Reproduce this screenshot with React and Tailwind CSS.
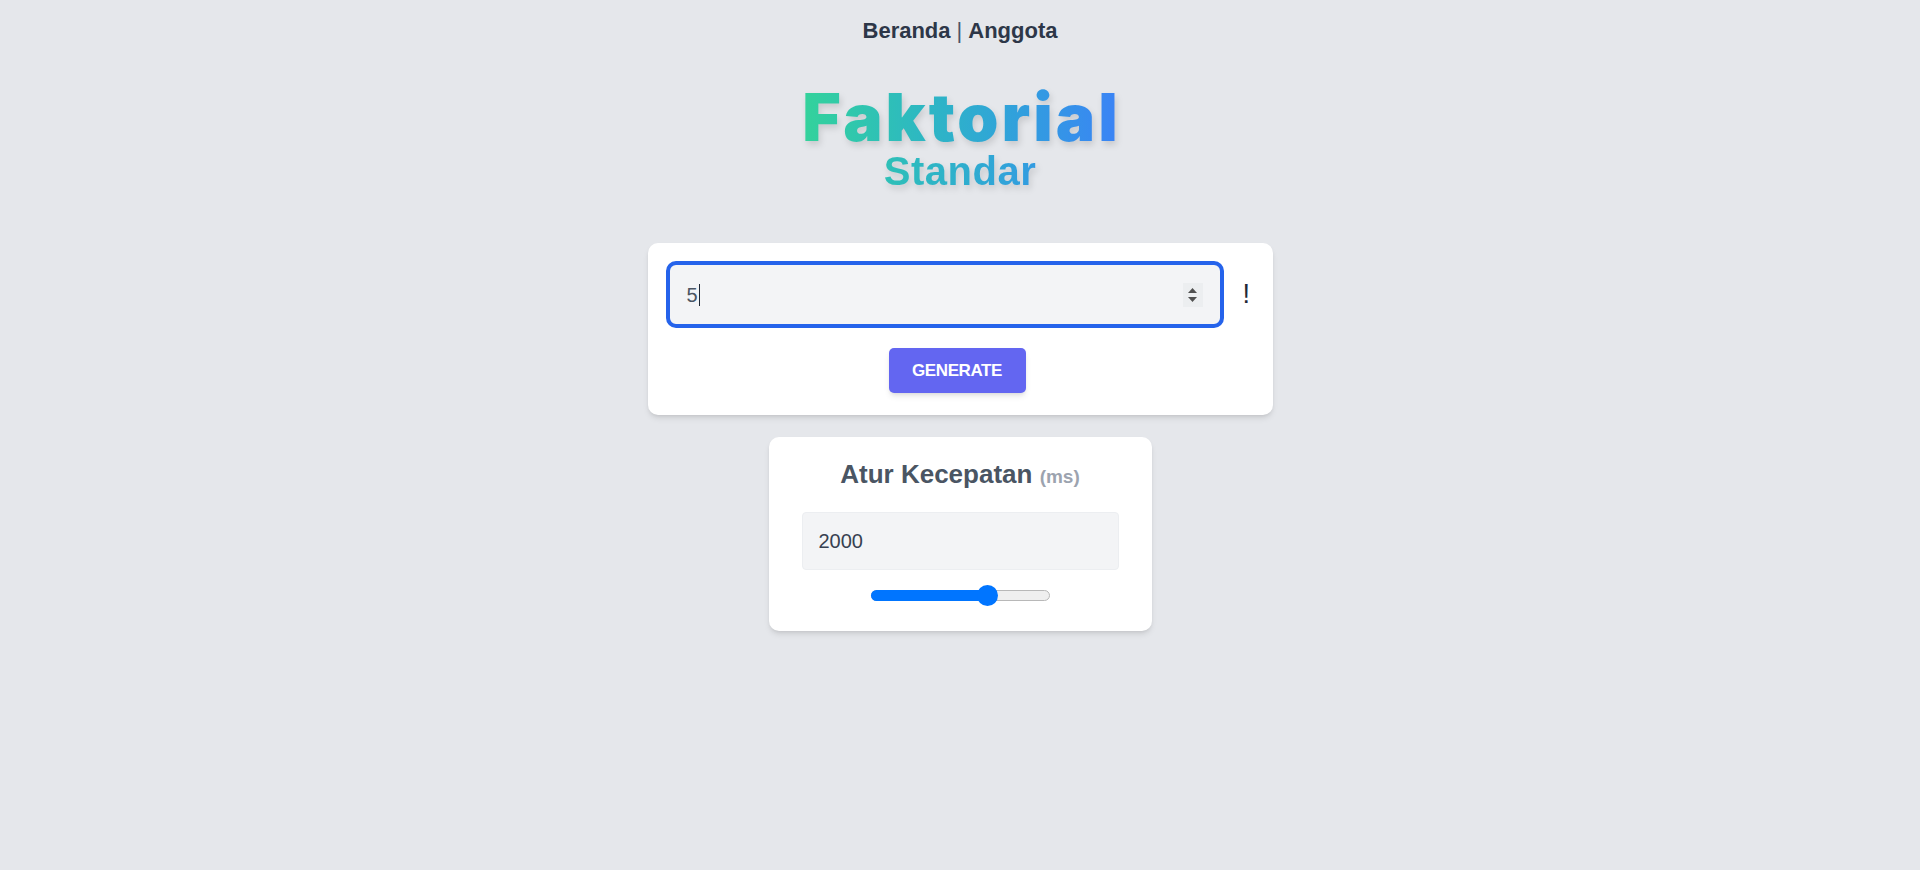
export default function App() {
  const font = { fontFamily: '"Liberation Sans", Arial, sans-serif' };
  return (
    <div
      className="min-h-[870px] w-full bg-[#e5e7eb] flex flex-col items-center"
      style={font}
    >
      {/* Nav */}
      <nav className="pt-[20px] text-[22px] leading-[22px] font-bold text-[#2d3748] flex items-center">
        <a className="cursor-pointer">Beranda</a>
        <span className="font-normal text-[#4a5568] px-[6px]">|</span>
        <a className="cursor-pointer">Anggota</a>
      </nav>

      {/* Title */}
      <div className="mt-[41px] drop-shadow-[2px_4px_3px_rgba(0,0,0,0.12)]">
        <div className="bg-gradient-to-r from-[#34d399] to-[#3b82f6] bg-clip-text text-transparent text-center">
          <div className="font-['Inter',sans-serif] font-black text-[66px] leading-[68px] tracking-[3px] pl-[3px]">Faktorial</div>
          <div className="font-bold text-[40px] leading-[40px] tracking-[0.5px]">Standar</div>
        </div>
      </div>

      {/* Card 1 */}
      <div className="mt-[52px] w-[625px] bg-white rounded-[10px] shadow-md pt-[18px] pb-[22px] px-[18px]">
        <div className="flex items-center">
          <div className="w-[558px] h-[67px] border-4 border-[#2563eb] rounded-[10px] bg-[#f3f4f6] flex items-center pl-[17px] pr-[17px]">
            <div className="flex-1 flex items-center">
              <span className="text-[20px] text-[#4b5563]">5</span>
              <span className="w-px h-[22px] bg-[#1f2937] ml-[1px]"></span>
            </div>
            <div className="w-[20px] h-[24px] bg-[#eceef0] flex flex-col items-center justify-center gap-[4px]">
              <svg width="9" height="5" viewBox="0 0 9 5">
                <path d="M4.5 0 L9 5 L0 5 Z" fill="#505050" />
              </svg>
              <svg width="9" height="5" viewBox="0 0 9 5">
                <path d="M0 0 L9 0 L4.5 5 Z" fill="#505050" />
              </svg>
            </div>
          </div>
          <span className="ml-[19px] text-[27px] leading-[27px] text-[#1f2937]">!</span>
        </div>
        <div className="mt-[20px] flex justify-center">
          <button className="mr-[6px] w-[137px] h-[45px] bg-[#6366f1] rounded-[5px] shadow-md text-white font-bold text-[17px] tracking-[-0.4px]">
            GENERATE
          </button>
        </div>
      </div>

      {/* Card 2 */}
      <div className="mt-[22px] w-[383px] bg-white rounded-[10px] shadow-md pt-[24px] pb-[25px] px-[33px] flex flex-col items-center">
        <div className="text-[26px] leading-[26px] font-bold text-[#4a5563]">
          Atur Kecepatan <span className="text-[19px] text-[#9ca3af]">(ms)</span>
        </div>
        <div className="mt-[22px] w-[317px] h-[58px] bg-[#f3f4f6] border border-[#eceef1] rounded-[4px] flex items-center pl-[16px] text-[20px] text-[#374151]">
          2000
        </div>
        <div className="mt-[15px] h-[21px] flex items-center">
          <div className="relative w-[179px] h-[11px] rounded-full bg-[#efefef] border border-[#b8b8b8]">
            <div className="absolute left-[-1px] top-[-1px] h-[11px] w-[116px] rounded-full bg-[#0075ff]"></div>
            <div className="absolute left-[105px] top-[-6px] w-[21px] h-[21px] rounded-full bg-[#0075ff]"></div>
          </div>
        </div>
      </div>
    </div>
  );
}
